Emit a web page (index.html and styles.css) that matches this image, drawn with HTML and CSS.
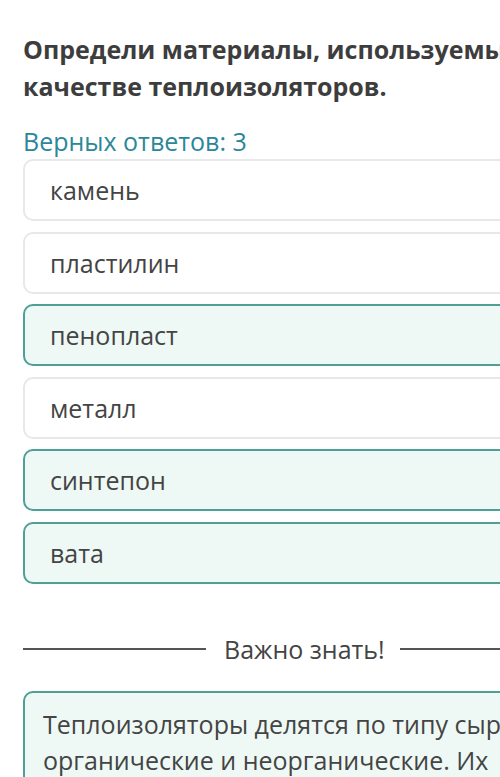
FILE: index.html
```html
<!DOCTYPE html>
<html lang="ru">
<head>
<meta charset="utf-8">
<link rel="stylesheet" href="styles.css">
</head>
<body>
<div class="page">
  <h1 class="question">Определи материалы, используемые в качестве теплоизоляторов.</h1>
  <div class="hint">Верных ответов: 3</div>
  <div class="options">
    <div class="option">камень</div>
    <div class="option">пластилин</div>
    <div class="option correct">пенопласт</div>
    <div class="option">металл</div>
    <div class="option correct">синтепон</div>
    <div class="option correct">вата</div>
  </div>
  <div class="divider"><span class="line"></span><span class="label">Важно знать!</span><span class="line"></span></div>
  <div class="info">Теплоизоляторы делятся по типу сырья на органические и неорганические. Их</div>
</div>
</body>
</html>
```
FILE: styles.css
```css
html, body {
  margin: 0;
  padding: 0;
  background: #ffffff;
  overflow: hidden;
}
body {
  width: 500px;
  height: 777px;
  font-family: "Open Sans", "Noto Sans", sans-serif;
  color: #444;
}
.page {
  width: 620px;
  padding: 31px 0 0 23px;
}
.question {
  margin: 0;
  font-size: 25px;
  font-weight: 700;
  line-height: 37px;
  color: #3d3d3d;
  width: 520px;
}
.hint {
  margin-top: 20px;
  font-size: 25px;
  line-height: 32px;
  color: #2b8799;
}
.options {
  margin-top: 2px;
  display: flex;
  flex-direction: column;
  gap: 10.5px;
}
.option {
  box-sizing: border-box;
  height: 62px;
  border: 2px solid #e8e8e8;
  border-radius: 10px;
  padding-left: 25px;
  display: flex;
  align-items: center;
  font-size: 25px;
  color: #444;
  background: #fff;
}
.option.correct {
  border-color: #4f9f96;
  background: #eef9f5;
}
.divider {
  margin-top: 48px;
  display: flex;
  align-items: center;
  width: 560px;
}
.divider .line {
  height: 2px;
  background: #555;
  width: 183px;
}
.divider .line:last-child {
  flex: 1;
}
.divider .label {
  font-size: 25px;
  color: #444;
  padding: 0 15px 0 18px;
}
.info {
  margin-top: 25px;
  border: 2px solid #4f9f96;
  border-radius: 10px;
  background: #eef9f5;
  padding: 13px 18px;
  font-size: 25px;
  line-height: 36px;
  color: #444;
  width: 560px;
}
```
